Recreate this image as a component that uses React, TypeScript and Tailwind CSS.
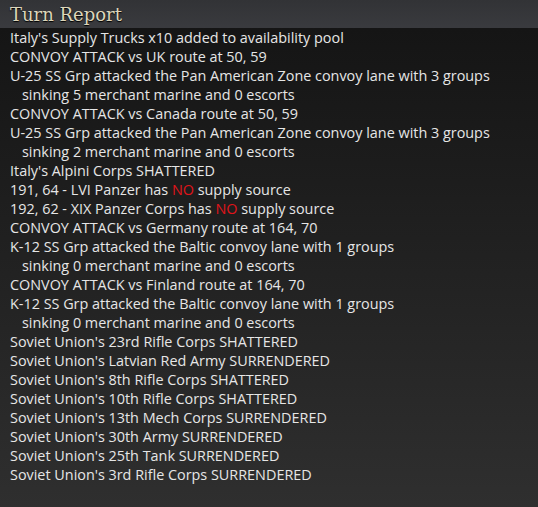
const lines: { text: string; indent?: boolean; no?: [string, string] }[] = [
  { text: "Italy's Supply Trucks x10 added to availability pool" },
  { text: "CONVOY ATTACK vs UK route at 50, 59" },
  { text: "U-25 SS Grp attacked the Pan American Zone convoy lane with 3 groups" },
  { text: "sinking 5 merchant marine and 0 escorts", indent: true },
  { text: "CONVOY ATTACK vs Canada route at 50, 59" },
  { text: "U-25 SS Grp attacked the Pan American Zone convoy lane with 3 groups" },
  { text: "sinking 2 merchant marine and 0 escorts", indent: true },
  { text: "Italy's Alpini Corps SHATTERED" },
  { text: "", no: ["191, 64 - LVI Panzer has ", " supply source"] },
  { text: "", no: ["192, 62 - XIX Panzer Corps has ", " supply source"] },
  { text: "CONVOY ATTACK vs Germany route at 164, 70" },
  { text: "K-12 SS Grp attacked the Baltic convoy lane with 1 groups" },
  { text: "sinking 0 merchant marine and 0 escorts", indent: true },
  { text: "CONVOY ATTACK vs Finland route at 164, 70" },
  { text: "K-12 SS Grp attacked the Baltic convoy lane with 1 groups" },
  { text: "sinking 0 merchant marine and 0 escorts", indent: true },
  { text: "Soviet Union's 23rd Rifle Corps SHATTERED" },
  { text: "Soviet Union's Latvian Red Army SURRENDERED" },
  { text: "Soviet Union's 8th Rifle Corps SHATTERED" },
  { text: "Soviet Union's 10th Rifle Corps SHATTERED" },
  { text: "Soviet Union's 13th Mech Corps SURRENDERED" },
  { text: "Soviet Union's 30th Army SURRENDERED" },
  { text: "Soviet Union's 25th Tank SURRENDERED" },
  { text: "Soviet Union's 3rd Rifle Corps SURRENDERED" },
];

export default function App() {
  return (
    <div className="w-[538px] h-[507px] overflow-hidden flex flex-col bg-[#1a1a1a]">
      <div className="h-[31px] shrink-0 bg-gradient-to-b from-[#323336] to-[#3a3b3f] border-b border-[#8c8c8c] px-[10px] pt-[3px]">
        <span className="text-[#ddd6bb] text-[18px] leading-[20px] font-['DejaVu_Serif',serif] [text-shadow:0_1px_1px_#000]">
          Turn Report
        </span>
      </div>
      <div className="flex-1 bg-gradient-to-b from-[#151515] to-[#2f2f2f] pl-[10px] -mt-[3px] font-['Open_Sans','Noto_Sans',sans-serif] text-[14.4px] leading-[19px] text-[#e6e6e6]">
        {lines.map((l, i) => (
          <div key={i} className={l.indent ? "pl-[12px] whitespace-nowrap" : "whitespace-nowrap"}>
            {l.no ? (
              <>
                {l.no[0]}
                <span className="text-[#e0141a]">NO</span>
                {l.no[1]}
              </>
            ) : (
              l.text
            )}
          </div>
        ))}
      </div>
    </div>
  );
}
